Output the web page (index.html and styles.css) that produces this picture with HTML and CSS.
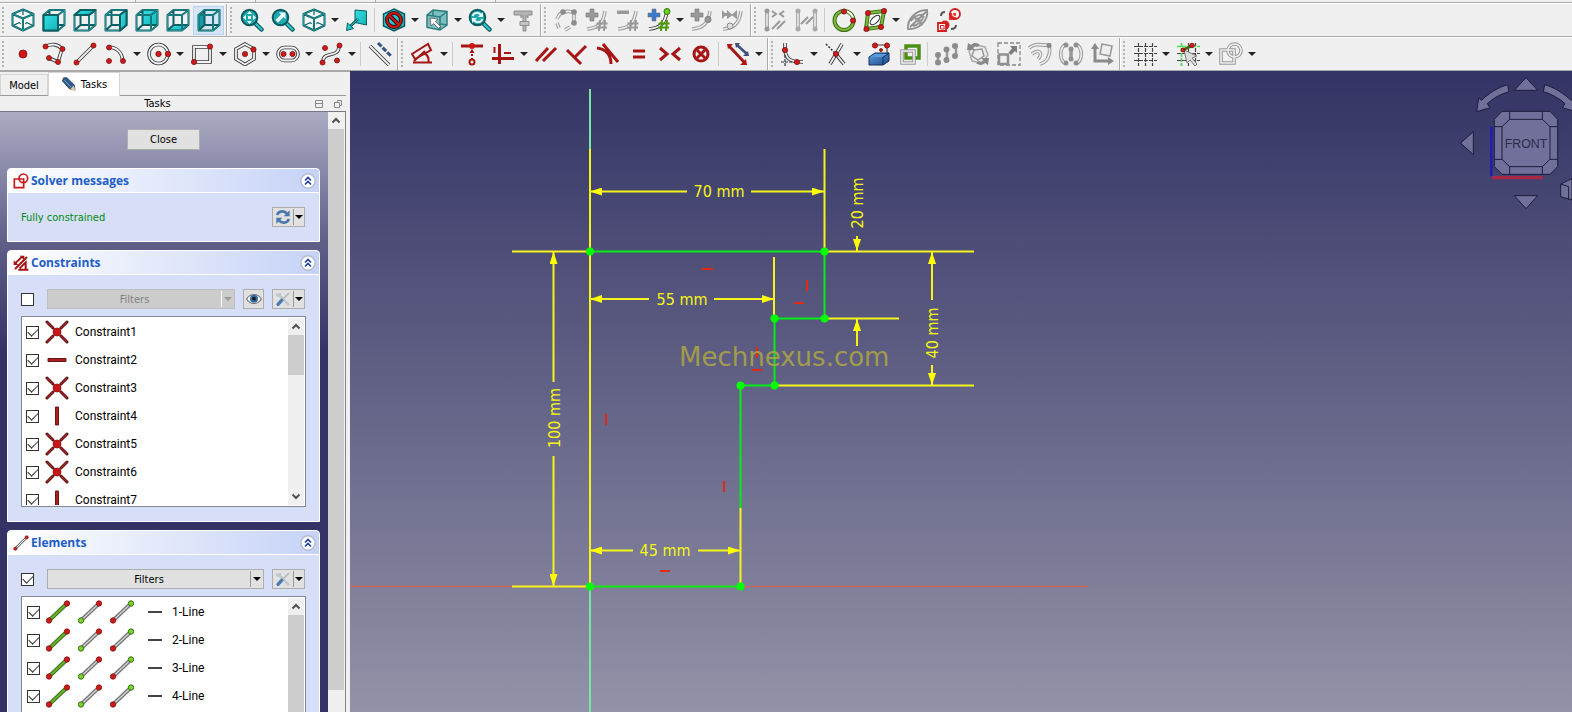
FILE: index.html
```html
<!DOCTYPE html>
<html lang="en">
<head>
    <meta charset="UTF-8">
    <meta name="viewport" content="width=device-width, initial-scale=1.0">
    <title>Sketcher</title>
    <link rel="stylesheet" href="styles.css">
</head>
<body>
    <!-- Icon set -->
    <svg class="defs" aria-hidden="true">
        <defs>
            <linearGradient id="cyan" x1="0" y1="0" x2="1" y2="1">
                <stop offset="0" stop-color="#34e0e2"/><stop offset="1" stop-color="#13b4bc"/>
            </linearGradient>
            <linearGradient id="blue" x1="0" y1="0" x2="1" y2="1">
                <stop offset="0" stop-color="#5b9be0"/><stop offset="1" stop-color="#1d4b86"/>
            </linearGradient>
            <marker id="arrow" viewBox="0 0 12 8" refX="12" refY="4" markerWidth="12" markerHeight="8" markerUnits="userSpaceOnUse" orient="auto-start-reverse">
                <path d="M0 0L12 4L0 8z" fill="#ff0"/>
            </marker>
        </defs>

        <symbol id="box" viewBox="0 0 24 24">
            <path class="t" d="M1.500 7H16V22.500H1.500zM7.500 2H22.500V17H7.500zM1.500 7L7.500 2M16 7L22.500 2M16 22.500L22.500 17M1.500 22.500L7.500 17"/>
            <path class="tl" d="M1.500 7H16V22.500H1.500zM7.500 2H22.500V17M1.500 7L7.500 2M16 7L22.500 2M16 22.500L22.500 17"/>
        </symbol>
        <symbol id="iso" viewBox="0 0 24 24">
            <path fill="#f4f8f8" d="M12 1.500L22.500 6V17.500L12 22.500L1.500 17.500V6z"/>
            <path class="t" d="M12 1.500L22.500 6V17.500L12 22.500L1.500 17.500V6zM1.500 6L12 10.500L22.500 6M12 10.500V22.500"/>
            <path class="t thin" d="M12 2V7M2 17.500L8.500 14.500M22 17.500L15.500 14.500M8.500 14.500L9.500 16M15.500 14.500L14.500 16"/>
            <path class="tl" d="M12 1.500L22.500 6V17.500L12 22.500L1.500 17.500V6zM1.500 6L12 10.500L22.500 6M12 10.500V22.500"/>
        </symbol>
        <symbol id="front" viewBox="0 0 24 24"><use href="#box"/><path class="c t" d="M1.500 7H16V22.500H1.500z"/></symbol>
        <symbol id="top" viewBox="0 0 24 24"><use href="#box"/><path class="c t" d="M1.500 7L7.500 2H22.500L16 7z"/></symbol>
        <symbol id="right" viewBox="0 0 24 24"><use href="#box"/><path class="c t" d="M16 7L22.500 2V17L16 22.500z"/></symbol>
        <symbol id="rear" viewBox="0 0 24 24"><path class="c" d="M7.500 2H22.500V17H7.500z"/><use href="#box"/></symbol>
        <symbol id="bottom" viewBox="0 0 24 24"><path class="c" d="M1.500 22.500L7.500 17H22.500L16 22.500z"/><use href="#box"/></symbol>
        <symbol id="left" viewBox="0 0 24 24"><path fill="#169aa0" d="M1.500 7L7.500 2V17L1.500 22.500z"/><use href="#box"/></symbol>

        <symbol id="lens" viewBox="0 0 24 24">
            <path d="M14 14L21.500 21.500" stroke="#0b5c60" stroke-width="4.500" stroke-linecap="round"/>
            <path d="M15 15L21.500 21.500" stroke="#2cc8cc" stroke-width="2" stroke-linecap="round"/>
            <circle cx="9.500" cy="9.500" r="7.800" fill="#1fa9ae" stroke="#0b5c60" stroke-width="2"/>
        </symbol>
        <symbol id="fit" viewBox="0 0 24 24"><use href="#lens"/><path fill="#eafafa" d="M9.500 3L12 6H7zM9.500 16L12 13H7zM3 9.500L6 7V12zM16 9.500L13 7V12zM8 8H11V11H8z"/></symbol>
        <symbol id="fitsel" viewBox="0 0 24 24"><use href="#lens"/><path fill="#eafafa" d="M14.500 4.500V11L12.500 9L7 14.500L4.500 12L10 6.500L8 4.500z"/></symbol>
        <symbol id="sync" viewBox="0 0 24 24"><use href="#lens"/><path fill="none" stroke="#eafafa" stroke-width="2" d="M4.500 8C6 4 11 4 13 7M14.500 11C13 15 8 15 6 12"/><path fill="#eafafa" d="M15 4V9H10zM4 15V10H9z"/></symbol>
        <symbol id="align" viewBox="0 0 24 24">
            <path class="c" stroke="#0b5c60" d="M10 2L21.500 3V17L10 14.500z"/>
            <path stroke="#0b5c60" stroke-width="3" d="M13 11L5 18.500"/><path stroke="#2cc8cc" stroke-width="1" d="M13 11L5 18.500"/>
            <path class="c" stroke="#0b5c60" d="M1.500 22.500L2.500 15L8.500 20.500z"/>
        </symbol>
        <symbol id="noclip" viewBox="0 0 24 24">
            <path class="c" stroke="#0b5c60" stroke-width="1.500" d="M12 1L22.500 6V18L12 23L1.500 18V6z"/>
            <circle cx="12" cy="12" r="7" fill="none" stroke="#3d0505" stroke-width="4"/><path d="M7 7L17 17" stroke="#3d0505" stroke-width="4"/>
            <circle cx="12" cy="12" r="7" fill="none" stroke="#c91919" stroke-width="2"/><path d="M7 7L17 17" stroke="#c91919" stroke-width="2"/>
        </symbol>
        <symbol id="boxsel" viewBox="0 0 24 24">
            <path fill="#7fbfc2" stroke="#2b7d80" stroke-width="1.500" d="M2 7L8 2L22 3.500V17L15 22L2 19.500z"/>
            <path fill="none" stroke="#2b7d80" stroke-width="1.500" d="M2 7L15 9L22 3.500M15 9V22M8 2V8M22 17L16 16"/>
            <path fill="#fff" stroke="#555" stroke-width=".8" d="M5 10L13 11L10.500 13.500L15.500 18.500L13.500 20.500L8.500 15.500L6 18z"/>
        </symbol>
        <symbol id="caliper" viewBox="0 0 24 24"><path fill="#b4b4b4" stroke="#8d8d8d" d="M3 3H21V7H17V10L15 7.500V23H12V7.500L10 10V7H3z"/><path fill="#c4c4c4" stroke="#8d8d8d" d="M9 13.500H18V17.500H9z"/></symbol>

        <!-- greyed out tools -->
        <symbol id="g-profile" viewBox="0 0 24 24"><path class="g" d="M3 11C5 5 10 2 19 4M20 6V14M16 19L11 22M5 20L3 15" stroke-width="3"/><path class="gi" d="M3 11C5 5 10 2 19 4M20 6V14M16 19L11 22M5 20L3 15"/><g fill="#8c8c8c"><circle cx="9" cy="4" r="2.800"/><circle cx="20" cy="4" r="2.800"/><circle cx="20" cy="15" r="2.800"/></g></symbol>
        <symbol id="g-curve" viewBox="0 0 24 24"><path class="g" d="M2 21C12 20 18 17 20 3"/><path class="gi" d="M2 21C12 20 18 17 20 3"/></symbol>
        <symbol id="hash" viewBox="0 0 24 24"><path fill="none" stroke="currentColor" stroke-width="2" d="M15 12L14 23M20 12L19 23M11.500 15.500H22.500M11 19.500H22"/></symbol>
        <symbol id="plus" viewBox="0 0 24 24"><path fill="currentColor" stroke="#777" stroke-width=".6" d="M5 1H9V5H13V9H9V13H5V9H1V5H5z"/></symbol>
        <symbol id="g-inc" viewBox="0 0 24 24"><use href="#g-curve"/><use href="#plus"/><use href="#hash"/></symbol>
        <symbol id="g-dec" viewBox="0 0 24 24"><use href="#g-curve"/><path fill="currentColor" d="M1 2.500H13V6H1z"/><use href="#hash"/></symbol>
        <symbol id="mult" viewBox="0 0 24 24"><path class="o" d="M2 21C12 20 18 17 20 3"/><path class="i" d="M2 21C12 20 18 17 20 3"/><g color="#3a78cc"><use href="#plus"/></g><g color="#4c9a0c"><use href="#hash"/></g><circle cx="20" cy="3.500" r="3" fill="#6bd31d" stroke="#2e7506"/></symbol>
        <symbol id="g-ins" viewBox="0 0 24 24"><use href="#g-curve"/><use href="#plus"/><circle cx="18" cy="11.500" r="3" fill="#999" stroke="#777"/></symbol>
        <symbol id="g-join" viewBox="0 0 24 24"><use href="#g-curve"/><path fill="currentColor" d="M1 2L4 5H6V2L11 6.500L16 2V11L11 7.500L6 11V8H4L1 11z"/><circle cx="9" cy="18" r="3" fill="#ddd" stroke="#8c8c8c"/></symbol>
        <symbol id="g-sel1" viewBox="0 0 24 24"><path class="g" d="M3 4V20"/><path class="gi" d="M3 4V20"/><path stroke="#9a9a9a" stroke-width="2" fill="none" d="M8 3L12 6L8 9M20 3L16 6L20 9M8 21L16 13M13 21L21 13"/><g fill="#999"><circle cx="3" cy="3" r="2.500"/><circle cx="3" cy="21" r="2.500"/></g></symbol>
        <symbol id="g-sel2" viewBox="0 0 24 24"><path class="g" d="M3 3V21M20 3V21"/><path class="gi" d="M3 3V21M20 3V21"/><path stroke="#9a9a9a" stroke-width="2" d="M6 16L13 9M11 16L18 9"/><g fill="#aaa"><circle cx="3" cy="3" r="2.500"/><circle cx="3" cy="21" r="2.500"/><circle cx="20" cy="3" r="2.500"/><circle cx="20" cy="21" r="2.500"/></g></symbol>
        <symbol id="g-ellipse" viewBox="0 0 24 24"><path fill="none" stroke="#8e8e8e" stroke-width="1.800" d="M2 21C1 11 10 2 21 2C23 12 13 22 2 21zM4 19L20 4M7 8L16 16M5 13C9 8 14 6 18 7M7 18C12 17 16 13 18 8"/><g fill="#999"><circle cx="12" cy="12" r="2.500"/><circle cx="8" cy="9" r="2"/><circle cx="15" cy="16" r="2"/></g></symbol>
        <symbol id="g-arr" viewBox="0 0 24 24"><path stroke="#999" stroke-width="2.500" d="M3 13V20M12 9V18M21 3V13"/><g fill="#8c8c8c"><circle cx="3" cy="13" r="3"/><circle cx="3" cy="20.500" r="3"/><circle cx="11.500" cy="7.500" r="3"/><circle cx="11.500" cy="18" r="3"/><circle cx="20" cy="4" r="3"/><circle cx="20" cy="14" r="3"/></g></symbol>
        <symbol id="g-rot" viewBox="0 0 24 24"><path fill="#eee" stroke="#aaa" stroke-width="1.500" d="M3 9L10 3L19 5L22 13L16 21L6 19z"/><path fill="#eee" stroke="#999" stroke-width="1.500" d="M8 8L16 7L18 14L12 18L6 14z"/><path fill="#888" d="M1 8L2 1L5 3C8 0 12 1 14 3L11 5C9 4 8 4 7 6L9 8zM23 16L22 23L19 21C16 24 12 23 10 21L13 19C15 20 16 20 17 18L15 16z"/></symbol>
        <symbol id="g-scale" viewBox="0 0 24 24"><path fill="none" stroke="#888" stroke-width="1.300" stroke-dasharray="4 2" d="M1 1H23V23H1z"/><path fill="none" stroke="#909090" stroke-width="2.500" d="M2 12.500H11V22H2z"/><path fill="#7d7d7d" d="M20 4V11L18 9L14 13L11.500 10.500L15 6.500L13 4z"/></symbol>
        <symbol id="g-off" viewBox="0 0 24 24"><path class="g" d="M1 6C8 0 14 4 21 3C23 12 20 20 12 22M4 12C12 6 15 12 10 17"/><path class="gi" d="M1 6C8 0 14 4 21 3C23 12 20 20 12 22M4 12C12 6 15 12 10 17"/><circle cx="21" cy="3.500" r="2.500" fill="#888"/></symbol>
        <symbol id="g-sym" viewBox="0 0 24 24"><path class="g" d="M7 2C0 6 0 18 7 22M17 2C24 6 24 18 17 22M12 7V17"/><path class="gi" d="M7 2C0 6 0 18 7 22M17 2C24 6 24 18 17 22"/><g fill="#909090"><circle cx="7" cy="3" r="2.500"/><circle cx="7" cy="21" r="2.500"/><circle cx="17" cy="3" r="2.500"/><circle cx="17" cy="21" r="2.500"/><circle cx="12" cy="7" r="2.500"/><circle cx="12" cy="17" r="2.500"/></g></symbol>
        <symbol id="g-axes" viewBox="0 0 24 24"><path fill="none" stroke="#8a8a8a" stroke-width="3" d="M5 4V19H20"/><path fill="#8a8a8a" d="M1 7L5 1L9 7zM18 15L24 19L18 23z"/><path fill="#eee" stroke="#999" stroke-width="1.500" d="M12 2L22 4L20 14L10 12z"/></symbol>
        <symbol id="g-mirror" viewBox="0 0 24 24"><path class="g" d="M2 8H15V21H2zM22 8.500A6.500 6.500 0 1 1 9 8.500A6.500 6.500 0 1 1 22 8.500z"/><path class="gi" d="M2 8H15V21H2zM22 8.500A6.500 6.500 0 1 1 9 8.500A6.500 6.500 0 1 1 22 8.500z"/></symbol>

        <!-- geometry -->
        <symbol id="point" viewBox="0 0 24 24"><circle cx="12" cy="12" r="4" fill="#d01616" stroke="#8d0d0d" stroke-width=".8"/></symbol>
        <symbol id="poly" viewBox="0 0 24 24"><path class="o" d="M3 5C9 1 16 2 20 7L16 20L7 16"/><path class="i" d="M3 5C9 1 16 2 20 7L16 20L7 16"/><g class="d"><circle cx="3.500" cy="4.500" r="2.500"/><circle cx="20.500" cy="7" r="2.500"/><circle cx="16" cy="20" r="2.500"/><circle cx="7" cy="16" r="2.500"/></g></symbol>
        <symbol id="line" viewBox="0 0 24 24"><path class="o" d="M3.500 20.500L20.500 3.500"/><path class="i" d="M3.500 20.500L20.500 3.500"/><g class="d"><circle cx="3.500" cy="20.500" r="2.500"/><circle cx="20.500" cy="3.500" r="2.500"/></g></symbol>
        <symbol id="arc" viewBox="0 0 24 24"><path class="o" d="M4 5C12 5 18 10 18.500 18"/><path class="i" d="M4 5C12 5 18 10 18.500 18"/><g class="d"><circle cx="5" cy="5.500" r="2.500"/><circle cx="5" cy="19" r="2.500"/><circle cx="19" cy="19" r="2.500"/></g></symbol>
        <symbol id="circle" viewBox="0 0 24 24"><circle class="o" cx="11.500" cy="12" r="9.500"/><circle class="i" cx="11.500" cy="12" r="9.500"/><g class="d"><circle cx="11.500" cy="12" r="2.700"/><circle cx="21" cy="12" r="2.700"/></g></symbol>
        <symbol id="rect" viewBox="0 0 24 24"><path class="o" d="M4 5H20V20H4z"/><path class="i" d="M4 5H20V20H4z"/><g class="d"><circle cx="20" cy="4.500" r="2.600"/><circle cx="4" cy="20" r="2.600"/></g></symbol>
        <symbol id="hex" viewBox="0 0 24 24"><path class="o" d="M12 2L21 7V17L12 22.500L3 17V7z"/><path class="i" d="M12 2L21 7V17L12 22.500L3 17V7z"/><g class="d"><circle cx="12" cy="12" r="2.600"/><circle cx="20.500" cy="7.500" r="2.600"/></g></symbol>
        <symbol id="slot" viewBox="0 0 24 24"><rect class="o" x="2" y="5.500" width="20" height="13" rx="6.500"/><rect class="i" x="2" y="5.500" width="20" height="13" rx="6.500"/><g class="d"><circle cx="7.500" cy="12" r="2.600"/><circle cx="16.500" cy="12" r="2.600"/></g></symbol>
        <symbol id="spline" viewBox="0 0 24 24"><path class="o" d="M4 20C4 8 20 17 20 4"/><path class="i" d="M4 20C4 8 20 17 20 4"/><g class="d"><circle cx="3.500" cy="20.500" r="2.500"/><circle cx="6" cy="6" r="2.500"/><circle cx="20.500" cy="3.500" r="2.500"/><circle cx="18" cy="18.500" r="2.500"/></g></symbol>
        <symbol id="constr" viewBox="0 0 24 24"><path class="o" d="M2 4L21 23"/><path class="i" d="M2 4L21 23"/><path d="M10 1L23 14" stroke="#33547e" stroke-width="3" stroke-dasharray="5 1.500"/></symbol>

        <!-- constraints -->
        <symbol id="dim" viewBox="0 0 24 24"><path class="r" stroke-width="2.500" d="M1 12L17 2L20 8L4 17zM3 19L14 9M2 20.500H21M13 11C17 13 18 16 17.500 20"/></symbol>
        <symbol id="ponobj" viewBox="0 0 24 24"><path class="r w" d="M1 4H23"/><circle cx="12" cy="4" r="3" fill="#d01616"/><path class="r" stroke-dasharray="2 2" d="M12 8V18"/><circle class="r" cx="12" cy="20" r="2.500" fill="#fff"/><path fill="#a31212" d="M12 7L14.500 11H9.500z"/></symbol>
        <symbol id="hv" viewBox="0 0 24 24"><path class="r w" d="M8.500 2V22M1 16.500H23"/><path class="r" d="M3.500 5V11M13 11H20"/></symbol>
        <symbol id="para" viewBox="0 0 24 24"><path class="r w" d="M2 19L14 6M9 19L22 6"/></symbol>
        <symbol id="perp" viewBox="0 0 24 24"><path class="r w" d="M16 22L2 8M10 15L21 4"/></symbol>
        <symbol id="tang" viewBox="0 0 24 24"><path class="r w" d="M7 2L22 20M1 6C9 7 15 12 15 22"/></symbol>
        <symbol id="eq" viewBox="0 0 24 24"><path class="r w" d="M6 9H18M6 15H18"/></symbol>
        <symbol id="symm" viewBox="0 0 24 24"><path class="r w" d="M2 6L9 12L2 18M22 6L15 12L22 18"/></symbol>
        <symbol id="block" viewBox="0 0 24 24"><circle class="r w" cx="12" cy="12" r="7"/><path class="r w" d="M8 8L16 16M16 8L8 16"/></symbol>
        <symbol id="toggle" viewBox="0 0 24 24"><path class="r w" d="M3 4L19 21"/><path fill="#b31414" d="M1 2H7L2 7zM21 23H14L20 17z"/><path stroke="#3f4e78" stroke-width="2.500" d="M11 3L21 12"/><path fill="#3f4e78" d="M9 1H14L10 6zM23 14H17L22 9z"/></symbol>

        <symbol id="cclose" viewBox="0 0 24 24"><circle cx="12" cy="12.500" r="9.500" fill="none" stroke="#3d6e16" stroke-width="4"/><circle cx="12" cy="12.500" r="9.500" fill="none" stroke="#7abd3a" stroke-width="2"/><path d="M12 3A9.500 9.500 0 0 1 21.500 12.500" fill="none" stroke="#fff" stroke-width="2"/><g class="d"><circle cx="12" cy="3.500" r="2.600"/><circle cx="21" cy="12.500" r="2.600"/></g></symbol>
        <symbol id="cell" viewBox="0 0 24 24"><path fill="#fff" stroke="#3d6e16" stroke-width="4" d="M5 5L21 3L18 19L3 21z"/><path fill="none" stroke="#7abd3a" stroke-width="2" d="M5 5L21 3L18 19L3 21z"/><ellipse class="o thin" cx="12" cy="12" rx="6" ry="3" transform="rotate(-45 12 12)"/><g class="d"><circle cx="5" cy="5" r="2.600"/><circle cx="21" cy="3" r="2.600"/><circle cx="18" cy="19" r="2.600"/><circle cx="3.500" cy="21" r="2.600"/></g></symbol>
        <symbol id="merge" viewBox="0 0 24 24"><path fill="#e33" d="M12 5H19V12H12z"/><circle cx="18" cy="6" r="5" fill="none" stroke="#d11f1f" stroke-width="1.800"/><circle cx="18" cy="6" r="2.500" fill="none" stroke="#fff"/><circle cx="8" cy="17" r="4.500" fill="#d11f1f"/><path fill="#fff" stroke="#d11f1f" stroke-width="1.800" d="M1 15H9V23H1z"/><path fill="none" stroke="#d11f1f" d="M3.500 17.500H7V21H3.500z"/><path fill="none" stroke="#555" stroke-width="2" d="M4 8C4 6 5 4 8 4M14 21C17 21 19 20 19 17"/></symbol>
        <symbol id="fillet" viewBox="0 0 24 24"><path class="o" d="M4 1V8C5 17 9 20 22 20"/><path class="i" d="M4 1V8C5 17 9 20 22 20"/><path stroke="#333" stroke-width="1.200" stroke-dasharray="3 1" d="M4 13V24M0 20H12"/><g class="d"><circle cx="4" cy="8" r="2.600"/><circle cx="16" cy="20" r="2.600"/></g></symbol>
        <symbol id="trim" viewBox="0 0 24 24"><path class="o" d="M18 2L6 22M11 11L20 22"/><path class="i" d="M18 2L6 22M11 11L20 22"/><path stroke="#333" stroke-width="1.500" stroke-dasharray="2 1.500" d="M2 2L11 11"/><circle class="d" cx="12" cy="12" r="2.600"/></symbol>
        <symbol id="extern" viewBox="0 0 24 24"><path fill="url(#blue)" stroke="#12305c" stroke-width="1" d="M2 15L8 11H22L16 15V23H2zM16 15L22 11V19L16 23"/><path fill="#5b9be0" d="M3 15L8.500 12H20L15.500 15z"/><path class="o thin" d="M8 3H20V11"/><g class="d"><circle cx="8" cy="3.500" r="2.600"/><circle cx="20" cy="3.500" r="2.600"/><circle cx="14" cy="8" r="1.500"/></g></symbol>
        <symbol id="carbon" viewBox="0 0 24 24"><path fill="none" stroke="#4a8f16" stroke-width="3.500" d="M8 4H21V16H8z"/><path class="g" d="M4 9H16V21H4z"/><path class="gi" d="M4 9H16V21H4z"/></symbol>
        <symbol id="grid" viewBox="0 0 24 24"><path stroke="#444" stroke-width="1.200" stroke-dasharray="4 1" d="M5.500 1V24M12.500 1V24M19.500 1V24M1 4.500H24M1 11.500H24M1 18.500H24"/></symbol>
        <symbol id="snap" viewBox="0 0 24 24"><use href="#grid"/><path stroke="#4fe05a" stroke-width="1.500" stroke-dasharray="4 1" d="M5.500 1V24M1 4.500H24"/><path stroke="#3d6e16" stroke-width="3" d="M7 8L15 4"/><path fill="#ddd" stroke="#777" d="M8 8L21 14L16 16L21 22L19 24L14 18L11 21z"/><g class="d"><circle cx="7" cy="8" r="2"/><circle cx="16" cy="3.500" r="2.300"/></g></symbol>

        <!-- side panel -->
        <symbol id="pen" viewBox="0 0 24 24"><path fill="#2e5c8c" stroke="#24303c" d="M4 1L9 1L20 12L21 20L13 18L2 6z"/><path stroke="#79a3cc" stroke-width="1.500" d="M5 5L15 15"/><path fill="#e6d2a8" d="M19 13L22 22L14 18z"/></symbol>
        <symbol id="coin" viewBox="0 0 24 24"><path stroke="#5b1212" stroke-width="3" stroke-linecap="round" d="M2 2L8 8M22 2L16 8M2 22L8 16M22 22L16 16"/><path stroke="#a32525" stroke-width="1.200" d="M2 2L8 8M22 2L16 8M2 22L8 16M22 22L16 16"/><circle cx="12" cy="12" r="4" fill="#cc1414" stroke="#8d1111" stroke-width=".8"/></symbol>
        <symbol id="hor" viewBox="0 0 24 24"><path fill="#a82020" stroke="#6b1414" d="M3 10.500H21V13.500H3z"/></symbol>
        <symbol id="ver" viewBox="0 0 24 24"><path fill="#a82020" stroke="#6b1414" d="M10.500 3H13.500V21H10.500z"/></symbol>
        <symbol id="sketch" viewBox="0 0 24 24"><path fill="none" stroke="#c41a1a" stroke-width="2.500" d="M2 9H16V22H2z"/><circle cx="15.500" cy="8" r="6.500" fill="none" stroke="#c41a1a" stroke-width="2.500"/></symbol>
        <symbol id="constraints" viewBox="0 0 24 24"><path class="r w" d="M3 13L14 2M3 21L21 3M8 22H23M10 20L19 11V22"/><path fill="#a31212" d="M1 8V15H8zM10 1H17V8z"/></symbol>
        <symbol id="refresh" viewBox="0 0 24 24"><path fill="none" stroke="#4a78ac" stroke-width="4" d="M3 9C6 2 14 2 18 7M21 15C18 22 10 22 6 17"/><path fill="#4a78ac" d="M22 2V11H13zM2 22V13H11z"/></symbol>
        <symbol id="eye" viewBox="0 0 24 24"><path fill="#fff" stroke="#777" stroke-width="1.800" d="M1 12C6 3 18 3 23 12C18 21 6 21 1 12z"/><circle cx="12" cy="11.500" r="6" fill="#3a6a9e"/><circle cx="12" cy="11.500" r="2.800" fill="#0c1c30"/></symbol>
        <symbol id="tools" viewBox="0 0 24 24"><path stroke="#c0c8cb" stroke-width="4" stroke-linecap="round" d="M5 5L20 20"/><path fill="none" stroke="#c0c8cb" stroke-width="3" d="M2 4C3 9 8 8 8 3"/><path stroke="#b0b8bc" stroke-width="2" d="M12 12L21 3"/><path stroke="#4a7cb4" stroke-width="5" stroke-linecap="round" d="M4.500 20L10 14"/></symbol>
        <symbol id="e-edge" viewBox="0 0 24 24"><path stroke="#3d6e16" stroke-width="4" d="M3 20.500L21 3.500"/><path stroke="#69b22c" stroke-width="2" d="M3 20.500L21 3.500"/><g class="d"><circle cx="3" cy="20.500" r="2.700"/><circle cx="21" cy="3.500" r="2.700"/></g></symbol>
        <symbol id="e-start" viewBox="0 0 24 24"><path stroke="#777" stroke-width="4" d="M3 20.500L21 3.500"/><path stroke="#ccc" stroke-width="1.500" d="M3 20.500L21 3.500"/><circle cx="3" cy="20.500" r="2.700" fill="#7bd42e" stroke="#3d6e16"/><circle class="d" cx="21" cy="3.500" r="2.700"/></symbol>
        <symbol id="e-end" viewBox="0 0 24 24"><path stroke="#777" stroke-width="4" d="M3 20.500L21 3.500"/><path stroke="#ccc" stroke-width="1.500" d="M3 20.500L21 3.500"/><circle class="d" cx="3" cy="20.500" r="2.700"/><circle cx="21" cy="3.500" r="2.700" fill="#7bd42e" stroke="#3d6e16"/></symbol>
        <symbol id="chev2" viewBox="0 0 16 16"><circle cx="8" cy="8" r="7.200" fill="#fff" stroke="#b4bcd4" stroke-width="1.500"/><path fill="none" stroke="#1c3f94" stroke-width="1.600" d="M5 7.500L8 4.500L11 7.500M5 11.500L8 8.500L11 11.500"/></symbol>
        <symbol id="up" viewBox="0 0 16 16"><path fill="none" stroke="#505050" stroke-width="2" d="M4.500 10L8 6.500L11.500 10"/></symbol>
        <symbol id="down" viewBox="0 0 16 16"><path fill="none" stroke="#505050" stroke-width="2" d="M4.500 6L8 9.500L11.500 6"/></symbol>
    </svg>

    <header class="toolbars">
        <div class="strip"><span></span><span></span><span></span><span></span></div>
        <div class="row">
            <div class="toolbar">
                <button aria-label="Isometric"><svg><use href="#iso"/></svg></button>
                <button aria-label="Front"><svg><use href="#front"/></svg></button>
                <button aria-label="Top"><svg><use href="#top"/></svg></button>
                <button aria-label="Right"><svg><use href="#right"/></svg></button>
                <button aria-label="Rear"><svg><use href="#rear"/></svg></button>
                <button aria-label="Bottom"><svg><use href="#bottom"/></svg></button>
                <button aria-label="Left" class="active"><svg><use href="#left"/></svg></button>
            </div>
            <div class="toolbar">
                <button aria-label="Fit all"><svg><use href="#fit"/></svg></button>
                <button aria-label="Fit selection"><svg><use href="#fitsel"/></svg></button>
                <button aria-label="Views"><svg><use href="#iso"/></svg></button>
                <button class="more" aria-label="More views"></button>
                <button aria-label="Align to selection"><svg><use href="#align"/></svg></button>
                <i class="sep"></i>
                <button aria-label="Draw style"><svg><use href="#noclip"/></svg></button>
                <button class="more" aria-label="More draw styles"></button>
                <button aria-label="Box selection"><svg><use href="#boxsel"/></svg></button>
                <button class="more" aria-label="More selection"></button>
                <button aria-label="Sync view"><svg><use href="#sync"/></svg></button>
                <button class="more" aria-label="More sync"></button>
                <button aria-label="Measure"><svg><use href="#caliper"/></svg></button>
            </div>
            <div class="toolbar">
                <button aria-label="Convert to B-spline"><svg><use href="#g-profile"/></svg></button>
                <button aria-label="Increase degree"><svg><use href="#g-inc"/></svg></button>
                <button aria-label="Decrease degree"><svg><use href="#g-dec"/></svg></button>
                <button aria-label="Knot multiplicity"><svg><use href="#mult"/></svg></button>
                <button class="more" aria-label="More multiplicity"></button>
                <button aria-label="Insert knot"><svg><use href="#g-ins"/></svg></button>
                <button aria-label="Join curves"><svg><use href="#g-join"/></svg></button>
            </div>
            <div class="toolbar">
                <button aria-label="Select constraints"><svg><use href="#g-sel1"/></svg></button>
                <button aria-label="Select elements"><svg><use href="#g-sel2"/></svg></button>
                <i class="sep"></i>
                <button aria-label="Periodic spline info"><svg><use href="#cclose"/></svg></button>
                <button aria-label="Internal geometry"><svg><use href="#cell"/></svg></button>
                <button class="more" aria-label="More geometry"></button>
                <button aria-label="Ellipse info"><svg><use href="#g-ellipse"/></svg></button>
                <button aria-label="Switch space"><svg><use href="#merge"/></svg></button>
            </div>
        </div>
        <div class="row">
            <div class="toolbar">
                <button aria-label="Point"><svg><use href="#point"/></svg></button>
                <button aria-label="Polyline"><svg><use href="#poly"/></svg></button>
                <button aria-label="Line"><svg><use href="#line"/></svg></button>
                <button aria-label="Arc"><svg><use href="#arc"/></svg></button>
                <button class="more" aria-label="More arcs"></button>
                <button aria-label="Circle"><svg><use href="#circle"/></svg></button>
                <button class="more" aria-label="More circles"></button>
                <button aria-label="Rectangle"><svg><use href="#rect"/></svg></button>
                <button class="more" aria-label="More rectangles"></button>
                <button aria-label="Polygon"><svg><use href="#hex"/></svg></button>
                <button class="more" aria-label="More polygons"></button>
                <button aria-label="Slot"><svg><use href="#slot"/></svg></button>
                <button class="more" aria-label="More slots"></button>
                <button aria-label="B-spline"><svg><use href="#spline"/></svg></button>
                <button class="more" aria-label="More B-splines"></button>
                <i class="sep"></i>
                <button aria-label="Construction mode"><svg><use href="#constr"/></svg></button>
            </div>
            <div class="toolbar">
                <button aria-label="Dimension"><svg><use href="#dim"/></svg></button>
                <button class="more" aria-label="More dimensions"></button>
                <i class="sep"></i>
                <button aria-label="Point on object"><svg><use href="#ponobj"/></svg></button>
                <button aria-label="Horizontal or vertical"><svg><use href="#hv"/></svg></button>
                <button class="more" aria-label="More alignments"></button>
                <button aria-label="Parallel"><svg><use href="#para"/></svg></button>
                <button aria-label="Perpendicular"><svg><use href="#perp"/></svg></button>
                <button aria-label="Tangent"><svg><use href="#tang"/></svg></button>
                <button aria-label="Equal"><svg><use href="#eq"/></svg></button>
                <button aria-label="Symmetric"><svg><use href="#symm"/></svg></button>
                <button aria-label="Block"><svg><use href="#block"/></svg></button>
                <i class="sep"></i>
                <button aria-label="Toggle driving"><svg><use href="#toggle"/></svg></button>
                <button class="more" aria-label="More toggles"></button>
            </div>
            <div class="toolbar">
                <button aria-label="Fillet"><svg><use href="#fillet"/></svg></button>
                <button class="more" aria-label="More fillets"></button>
                <button aria-label="Trim"><svg><use href="#trim"/></svg></button>
                <button class="more" aria-label="More trimming"></button>
                <button aria-label="External geometry"><svg><use href="#extern"/></svg></button>
                <button aria-label="Carbon copy"><svg><use href="#carbon"/></svg></button>
                <i class="sep"></i>
                <button aria-label="Move"><svg><use href="#g-arr"/></svg></button>
                <button aria-label="Rotate"><svg><use href="#g-rot"/></svg></button>
                <button aria-label="Scale"><svg><use href="#g-scale"/></svg></button>
                <button aria-label="Offset"><svg><use href="#g-off"/></svg></button>
                <button aria-label="Symmetry"><svg><use href="#g-sym"/></svg></button>
                <button aria-label="Remove axes alignment"><svg><use href="#g-axes"/></svg></button>
            </div>
            <div class="toolbar">
                <button aria-label="Grid"><svg><use href="#grid"/></svg></button>
                <button class="more" aria-label="Grid settings"></button>
                <button aria-label="Snap"><svg><use href="#snap"/></svg></button>
                <button class="more" aria-label="Snap settings"></button>
                <button aria-label="Rendering order"><svg><use href="#g-mirror"/></svg></button>
                <button class="more" aria-label="Rendering settings"></button>
            </div>
        </div>
    </header>

    <main>
        <aside>
            <nav class="tabs">
                <button class="tab">Model</button>
                <button class="tab current"><svg><use href="#pen"/></svg>Tasks</button>
            </nav>
            <div class="dock-title">
                <span>Tasks</span>
                <svg viewBox="0 0 28 10"><path fill="none" stroke="#888" d="M.5 1.500H7.500V8.500H.5zM.5 4.500H7.500M19.500 3.500H24.500V8.500H19.500zM22.500 3V1.500H26.500V6.500H25"/></svg>
            </div>
            <div class="dock">
                <div class="tasks">
                    <button class="close">Close</button>

                    <!-- Solver messages -->
                    <section class="box">
                        <h2><svg><use href="#sketch"/></svg>Solver messages<button class="fold" aria-label="Collapse"><svg><use href="#chev2"/></svg></button></h2>
                        <div class="body">
                            <div class="line">
                                <p class="ok">Fully constrained</p>
                                <button class="split" aria-label="Recompute"><svg><use href="#refresh"/></svg><i></i></button>
                            </div>
                        </div>
                    </section>

                    <!-- Constraints -->
                    <section class="box">
                        <h2><svg><use href="#constraints"/></svg>Constraints<button class="fold" aria-label="Collapse"><svg><use href="#chev2"/></svg></button></h2>
                        <div class="body">
                            <div class="line">
                                <input type="checkbox" aria-label="Filter constraints">
                                <div class="combo disabled"><select aria-label="Constraint filters" disabled><option>Filters</option></select></div>
                                <button class="split single" aria-label="Show or hide"><svg><use href="#eye"/></svg></button>
                                <button class="split" aria-label="Constraint settings"><svg><use href="#tools"/></svg><i></i></button>
                            </div>
                            <div class="list">
                                <ul>
                                    <li><label><input type="checkbox" checked><svg><use href="#coin"/></svg>Constraint1</label></li>
                                    <li><label><input type="checkbox" checked><svg><use href="#hor"/></svg>Constraint2</label></li>
                                    <li><label><input type="checkbox" checked><svg><use href="#coin"/></svg>Constraint3</label></li>
                                    <li><label><input type="checkbox" checked><svg><use href="#ver"/></svg>Constraint4</label></li>
                                    <li><label><input type="checkbox" checked><svg><use href="#coin"/></svg>Constraint5</label></li>
                                    <li><label><input type="checkbox" checked><svg><use href="#coin"/></svg>Constraint6</label></li>
                                    <li><label><input type="checkbox" checked><svg><use href="#ver"/></svg>Constraint7</label></li>
                                </ul>
                                <div class="scroll"><svg><use href="#up"/></svg><span class="thumb short"></span><svg><use href="#down"/></svg></div>
                            </div>
                        </div>
                    </section>

                    <!-- Elements -->
                    <section class="box">
                        <h2><svg><use href="#line"/></svg>Elements<button class="fold" aria-label="Collapse"><svg><use href="#chev2"/></svg></button></h2>
                        <div class="body">
                            <div class="line">
                                <input type="checkbox" aria-label="Filter elements" checked>
                                <div class="combo"><select aria-label="Element filters"><option>Filters</option></select></div>
                                <button class="split" aria-label="Element settings"><svg><use href="#tools"/></svg><i></i></button>
                            </div>
                            <div class="list elements">
                                <ul>
                                    <li><label><input type="checkbox" checked><svg><use href="#e-edge"/></svg><svg><use href="#e-start"/></svg><svg><use href="#e-end"/></svg><i class="dash"></i>1-Line</label></li>
                                    <li><label><input type="checkbox" checked><svg><use href="#e-edge"/></svg><svg><use href="#e-start"/></svg><svg><use href="#e-end"/></svg><i class="dash"></i>2-Line</label></li>
                                    <li><label><input type="checkbox" checked><svg><use href="#e-edge"/></svg><svg><use href="#e-start"/></svg><svg><use href="#e-end"/></svg><i class="dash"></i>3-Line</label></li>
                                    <li><label><input type="checkbox" checked><svg><use href="#e-edge"/></svg><svg><use href="#e-start"/></svg><svg><use href="#e-end"/></svg><i class="dash"></i>4-Line</label></li>
                                </ul>
                                <div class="scroll"><svg><use href="#up"/></svg><span class="thumb"></span></div>
                            </div>
                        </div>
                    </section>
                </div>
                <div class="scroll dock-scroll"><svg><use href="#up"/></svg><span class="thumb"></span></div>
            </div>
        </aside>

        <div class="view">
            <svg class="drawing" viewBox="350 71 1222 641" preserveAspectRatio="xMinYMin meet">
                <!-- axes -->
                <path stroke="#d0605c" stroke-width="1.500" d="M350 586.500H1088"/>
                <path stroke="#7de3a0" stroke-width="2" d="M590 89V712"/>

                <!-- dimensions -->
                <path class="dim" d="M590 149V586M824.500 149V251M512 251.500H590M824 251.500H974M774 257V318M824 318.500H899M774 385.500H974M740.500 508V586M512 586.500H590"/>
                <g class="dim" marker-end="url(#arrow)">
                    <path d="M687 191.500H590"/><path d="M751 191.500H824"/>
                    <path d="M649 299H590"/><path d="M714 299H774"/>
                    <path d="M633 550.500H590"/><path d="M698 550.500H740"/>
                    <path d="M553.500 382V252"/><path d="M553.500 456V586"/>
                    <path d="M857 236V251"/><path d="M857 346V319"/>
                    <path d="M932 300V252"/><path d="M932 365V385"/>
                </g>
                <g class="value">
                    <text x="719" y="197">70 mm</text>
                    <text x="682" y="305">55 mm</text>
                    <text x="665" y="556">45 mm</text>
                    <text transform="translate(560 418) rotate(-90)">100 mm</text>
                    <text transform="translate(863 203) rotate(-90)">20 mm</text>
                    <text transform="translate(938 333) rotate(-90)">40 mm</text>
                </g>

                <!-- sketch -->
                <path stroke="#05ee14" stroke-width="2" fill="none" d="M590 251.500H824.500V318.500H774.500V385.500H740.500V508M590 586.500H740.500"/>
                <path stroke="#e02a10" stroke-width="2" d="M702 269H713M807 280V291M794 303H804M757 347V358M752 370H762M606 414V425M724 481V492M660 571H670"/>
                <g fill="#0f0">
                    <circle cx="590" cy="251.500" r="4"/><circle cx="824.500" cy="251.500" r="4"/>
                    <circle cx="824.500" cy="318.500" r="4"/><circle cx="774.500" cy="318.500" r="4"/>
                    <circle cx="774.500" cy="385.500" r="4"/><circle cx="740.500" cy="385.500" r="4"/>
                    <circle cx="740.500" cy="586.500" r="4"/><circle cx="590" cy="586.500" r="4"/>
                </g>
                <text class="mark" x="679" y="366">Mechnexus.com</text>
            </svg>

            <!-- navigation cube -->
            <svg class="navcube" viewBox="0 15 426 435">
                <g fill="#70709a" stroke="#1c1c3a" stroke-width="3">
                    <path d="M288 35L323 73H253zM288 428L323 389H253zM92 231L130 197V266z"/>
                    <path d="M233 56L237 77C213 84 190 96 172 113L180 125L140 137L146 96L154 103C176 82 204 64 233 56z"/>
                    <path d="M344 56L340 77C364 84 387 96 405 113L397 125L437 137L431 96L423 103C401 82 373 64 344 56z"/>
                    <path d="M392 354L426 338V402L392 392zM392 354L416 362V402"/>
                    <path d="M216 136H360L383 160V302L360 325H216L193 302V160z"/>
                    <path fill="none" d="M239 136V160L216 182H193M337 136V160L360 182H383M239 325V302L216 280H193M337 325V302L360 280H383M239 160H337M239 302H337M216 182V280M360 182V280"/>
                </g>
                <path stroke="#1c1cb4" stroke-width="7" d="M184 181V330"/>
                <path stroke="#a82846" stroke-width="10" d="M187 335H338"/>
                <text x="288" y="246">FRONT</text>
            </svg>
        </div>
    </main>
</body>
</html>
```

FILE: styles.css
```css
* {
    box-sizing: border-box;
}
body {
    margin: 0;
    height: 100vh;
    display: flex;
    flex-direction: column;
    overflow: hidden;
    background-color: #f0f0f0;
    color: #000;
    font-family: "DejaVu Sans Condensed", "DejaVu Sans", sans-serif;
    font-size: 11px;
}
button {
    font: inherit;
    color: inherit;
    padding: 0;
    border: none;
    background: none;
}
svg {
    display: block;
    flex: none;
}
.defs {
    position: absolute;
    width: 0;
    height: 0;
}

/* icon strokes */
.t {
    fill: none;
    stroke: #0c5f63;
    stroke-width: 2;
    stroke-linejoin: round;
}
.tl {
    fill: none;
    stroke: #35c4c8;
    stroke-width: 0.5;
}
.c {
    fill: url(#cyan);
}
.o {
    fill: none;
    stroke: #3a3a3a;
    stroke-width: 3.6;
}
.i {
    fill: none;
    stroke: #f4f4f4;
    stroke-width: 1.8;
}
.thin {
    stroke-width: 1.2;
}
.d {
    fill: #cf1b1b;
    stroke: #7c1010;
    stroke-width: 0.8;
}
.r {
    fill: none;
    stroke: #a51515;
    stroke-width: 2;
}
.w {
    stroke-width: 3;
}
.g {
    fill: none;
    stroke: #999;
    stroke-width: 3.6;
}
.gi {
    fill: none;
    stroke: #eee;
    stroke-width: 1.6;
}

/* toolbars */
.toolbars {
    flex: none;
}
.strip {
    display: flex;
    height: 3px;
    border-bottom: 1px solid #aaa;
}
.strip span {
    width: 120px;
    border-right: 1px solid #aaa;
}
.strip span:first-child {
    width: 136px;
}
.row {
    display: flex;
    height: 34px;
    border-top: 1px solid #fff;
    border-bottom: 1px solid #aaa;
}
.toolbar {
    display: flex;
    align-items: center;
    padding-right: 2px;
    border-left: 1px solid #fff;
    border-right: 1px solid #aaa;
    color: #999;
}
.toolbar:first-child {
    border-left: none;
}
.toolbar:last-child {
    border-right: none;
}
.toolbar::before {
    content: "";
    width: 2px;
    height: 26px;
    margin: 0 4px 0 2px;
    background: repeating-linear-gradient(#b4b4b4 0 2px, transparent 2px 4px);
}
.toolbar:first-child::before {
    margin-right: 3px;
}
.toolbar button {
    display: flex;
    align-items: center;
    justify-content: center;
    width: 31px;
    height: 29px;
}
.toolbar button svg {
    width: 24px;
    height: 24px;
}
.toolbar .active {
    background-color: #d5e5f5;
    border: 1px solid #b8d4ee;
}
.toolbar .more {
    width: 12px;
}
.more::before {
    content: "";
    border: 4px solid transparent;
    border-top-color: #222;
    border-bottom: none;
}
.sep {
    width: 1px;
    height: 24px;
    margin: 0 3px 0 2px;
    background-color: #ccc;
}

main {
    flex: 1;
    min-height: 0;
    display: flex;
}

/* side panel */
aside {
    width: 350px;
    flex: none;
    display: flex;
    flex-direction: column;
    padding-right: 4px;
    border-top: 1px solid #aaa;
}
.tabs {
    display: flex;
    align-items: flex-end;
    height: 24px;
    border-bottom: 1px solid #999;
}
.tab {
    display: flex;
    align-items: center;
    justify-content: center;
    width: 48px;
    height: 21px;
    border: 1px solid #d5d5d5;
    border-bottom: none;
}
.tab.current {
    gap: 4px;
    width: 72px;
    height: 24px;
    margin-bottom: -1px;
    background-color: #fff;
}
.tab svg {
    width: 16px;
    height: 16px;
}
.dock-title {
    display: flex;
    align-items: center;
    height: 16px;
    padding-right: 3px;
    border-bottom: 1px solid #777784;
}
.dock-title span {
    flex: 1;
    text-align: center;
}
.dock-title svg {
    width: 28px;
    height: 10px;
}
.dock {
    flex: 1;
    min-height: 0;
    display: flex;
    border-right: 1px solid #85858f;
}
.tasks {
    flex: 1;
    min-width: 0;
    overflow: hidden;
    display: flex;
    flex-direction: column;
    gap: 8px;
    padding: 17px 8px 0 7px;
    background: linear-gradient(#acabc4 0, #5f5f88 130px, #333366 240px);
}
.tasks > * {
    flex: none;
}
.close {
    align-self: center;
    width: 73px;
    height: 21px;
    margin-bottom: 10px;
    border: 1px solid #adadad;
    background-color: #e1e1e1;
}
.box {
    border: 1px solid #fff;
    border-radius: 4px 4px 0 0;
    background-color: #d6dff7;
}
.box h2 {
    display: flex;
    align-items: center;
    gap: 2px;
    height: 24px;
    margin: 0;
    padding: 0 3px 0 5px;
    border-bottom: 1px solid #fff;
    border-radius: 4px 4px 0 0;
    background: linear-gradient(90deg, #fff, #c6d3f7);
    color: #215dc6;
    font-family: "Open Sans", "Noto Sans", sans-serif;
    font-size: 12px;
}
.box h2 > svg {
    width: 16px;
    height: 16px;
}
.fold {
    margin-left: auto;
}
.fold svg {
    width: 16px;
    height: 16px;
}
.body {
    display: flex;
    flex-direction: column;
    gap: 7px;
    padding: 14px 13px;
}
.line {
    display: flex;
    align-items: center;
    gap: 8px;
    height: 20px;
    padding-right: 1px;
}
.ok {
    flex: 1;
    margin: 0;
    color: #008a10;
}
.split {
    display: flex;
    align-items: center;
    width: 33px;
    height: 20px;
    padding: 0 1px 0 2px;
    border: 1px solid #adadad;
    background-color: #e1e1e1;
}
.split svg {
    width: 16px;
    height: 16px;
}
.split i {
    display: flex;
    align-items: center;
    justify-content: center;
    flex: 1;
    height: 16px;
    margin-left: 2px;
    border-left: 1px solid #999;
}
.split i::before,
.combo::after {
    content: "";
    border: 4px solid transparent;
    border-top-color: #000;
    border-bottom: none;
}
.split.single {
    width: 21px;
}
input[type="checkbox"] {
    appearance: none;
    display: flex;
    align-items: center;
    justify-content: center;
    width: 13px;
    height: 13px;
    flex: none;
    margin: 0;
    border: 1px solid #333;
    background-color: #fff;
}
input:checked::before {
    content: "";
    width: 9px;
    height: 5px;
    margin-bottom: 3px;
    border: solid #333;
    border-width: 0 0 1px 1px;
    transform: rotate(-45deg);
}
.combo {
    display: flex;
    align-items: center;
    flex: 1;
    height: 20px;
    margin-left: 5px;
    padding-right: 2px;
    border: 1px solid #adadad;
    background-color: #e1e1e1;
}
.combo select {
    appearance: none;
    flex: 1;
    height: 16px;
    margin-right: 2px;
    padding: 0;
    border: none;
    border-right: 1px solid #999;
    border-radius: 0;
    background: none;
    color: #000;
    font: inherit;
    text-align: center;
    text-align-last: center;
    opacity: 1;
}
.combo.disabled {
    background-color: #ccc;
    border-color: #bfbfbf;
}
.combo.disabled select {
    color: #838383;
    border-right-color: #fff;
}
.combo.disabled::after {
    border-top-color: #999;
}
.list {
    display: flex;
    height: 191px;
    padding: 1px 1px 1px 0;
    border: 1px solid #828790;
    background-color: #fff;
    font-family: Roboto, sans-serif;
    font-size: 12px;
}
.list ul {
    flex: 1;
    margin: 0;
    padding: 0 0 0 4px;
    overflow: hidden;
    list-style: none;
}
.list label {
    display: flex;
    align-items: center;
    height: 28px;
}
.list label svg {
    width: 24px;
    height: 24px;
    margin: 0 6px;
}
.elements label {
    padding-left: 1px;
}
.elements label svg {
    margin: 0 2px 0 6px;
}
.dash {
    width: 14px;
    height: 2px;
    margin: 0 10px 0 12px;
    background-color: #444;
}
.scroll {
    display: flex;
    flex-direction: column;
    width: 16px;
    background-color: #f0f0f0;
}
.scroll svg {
    width: 16px;
    height: 17px;
}
.scroll svg:last-child {
    margin-top: auto;
}
.thumb {
    flex: 1;
    background-color: #cdcdcd;
}
.thumb.short {
    flex: none;
    height: 40px;
}
.dock-scroll {
    width: 17px;
    padding: 0 1px 22px 0;
}

/* 3D view */
.view {
    flex: 1;
    min-width: 0;
    position: relative;
    overflow: hidden;
    background: linear-gradient(#333365, #9292a8);
}
.drawing {
    width: 100%;
    height: 100%;
}
.dim {
    fill: none;
    stroke: #f4f41c;
    stroke-width: 2;
}
.value {
    fill: #f6f614;
    font-size: 16px;
    text-anchor: middle;
}
.mark {
    fill: #b5ad3c;
    fill-opacity: 0.8;
    font-family: "DejaVu Sans", sans-serif;
    font-size: 26px;
}
.navcube {
    position: absolute;
    top: 0;
    right: 0;
    width: 142px;
    height: 145px;
}
.navcube text {
    fill: #2c2c4a;
    font-family: "Liberation Sans", sans-serif;
    font-size: 37px;
    text-anchor: middle;
}
```
